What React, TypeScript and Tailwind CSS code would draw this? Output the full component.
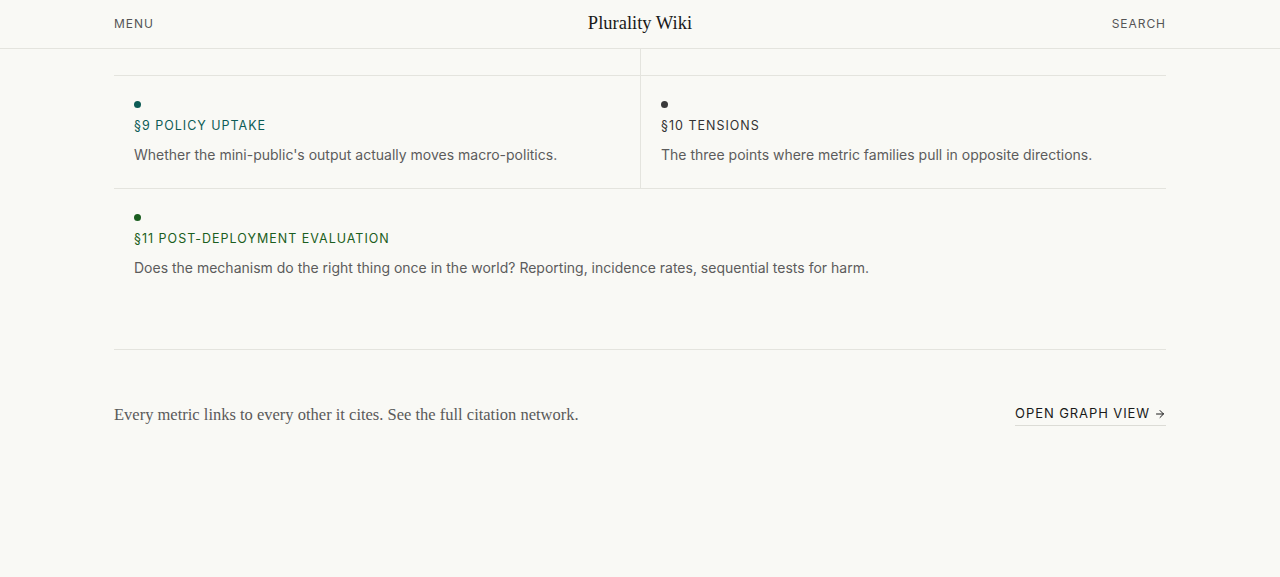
import { ArrowRight } from 'lucide-react';

const SANS = "font-['Inter',sans-serif]";
const SERIF = "font-['Liberation_Serif',serif]";

type Section = { id: string; title: string; text: string; dot: string; label: string };

const SECTIONS: Section[] = [
  {
    id: '§9',
    title: 'Policy uptake',
    text: "Whether the mini-public's output actually moves macro-politics.",
    dot: 'bg-[#0d5c55]',
    label: 'text-[#0d5c55]',
  },
  {
    id: '§10',
    title: 'Tensions',
    text: 'The three points where metric families pull in opposite directions.',
    dot: 'bg-[#3a3a3a]',
    label: 'text-[#333333]',
  },
  {
    id: '§11',
    title: 'Post-deployment evaluation',
    text: 'Does the mechanism do the right thing once in the world? Reporting, incidence rates, sequential tests for harm.',
    dot: 'bg-[#1b5e20]',
    label: 'text-[#1b5e20]',
  },
];

function SectionCell({ s, className }: { s: Section; className: string }) {
  return (
    <div className={`px-5 pt-[25px] pb-[21px] ${className}`}>
      <div className={`h-[7px] w-[7px] rounded-full ${s.dot}`} />
      <p className={`mt-2 text-[12.5px] leading-5 uppercase tracking-[1px] ${s.label}`}>
        {s.id} {s.title}
      </p>
      <p className="mt-[7px] text-[14px] leading-6 text-[#5c5c5c]">{s.text}</p>
    </div>
  );
}

export default function App() {
  return (
    <div className={`min-h-[577px] bg-[#f9f9f5] ${SANS}`}>
      <header className="border-b border-[#e4e4de]">
        <div className="mx-auto grid h-12 max-w-[1052px] grid-cols-3 items-center">
          <button className="justify-self-start text-[12px] uppercase tracking-[0.08em] text-[#555]">Menu</button>
          <span className={`justify-self-center text-[18.5px] text-[#1a1a1a] ${SERIF}`}>Plurality Wiki</span>
          <button className="justify-self-end text-[12px] uppercase tracking-[0.08em] text-[#555]">Search</button>
        </div>
      </header>

      <main className="mx-auto max-w-[1052px]">
        <div className="grid grid-cols-2">
          <div className="h-[27px] border-b border-[#e4e4de]" />
          <div className="h-[27px] border-b border-l border-[#e4e4de]" />
          <SectionCell s={SECTIONS[0]} className="border-b border-[#e4e4de]" />
          <SectionCell s={SECTIONS[1]} className="border-b border-l border-[#e4e4de] pl-5" />
          <SectionCell s={SECTIONS[2]} className="col-span-2" />
        </div>

        <div className="mt-12 flex items-center justify-between border-t border-[#e4e4de] pt-[51px]">
          <p className={`text-[16.5px] leading-7 text-[#5a5a5a] ${SERIF}`}>
            Every metric links to every other it cites. See the full citation network.
          </p>
          <a className="flex items-center gap-1 border-b border-[#dcdcd6] pb-[2px] text-[13px] uppercase tracking-[0.07em] text-[#1a1a1a]">
            Open graph view <ArrowRight className="h-3 w-3" strokeWidth={2} />
          </a>
        </div>
      </main>
    </div>
  );
}
